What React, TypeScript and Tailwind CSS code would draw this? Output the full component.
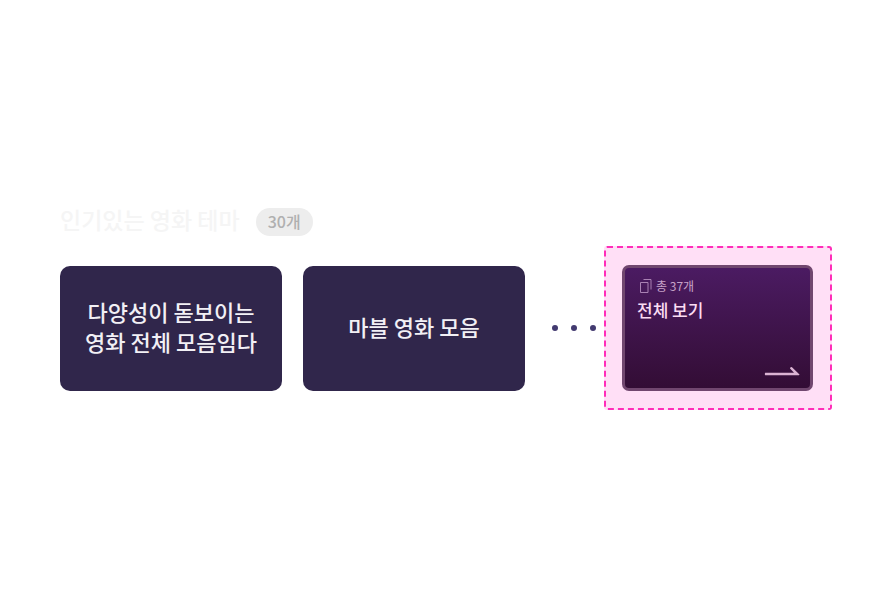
const cardClass =
  "h-[125px] min-w-0 flex-1 rounded-[10px] bg-[#30264b] pb-[5px] text-center text-[22px] leading-[30px] font-medium text-[#f2f0f5]";

export default function App() {
  return (
    <main className="min-h-screen bg-white pt-[206px] pr-11 pl-15 font-['Noto_Sans_CJK_KR',sans-serif]">
      <header className="flex h-[30px] items-end gap-4">
        <h1 className="pb-[2px] text-[23px] leading-[30px] font-medium text-[#f5f5f5]">인기있는 영화 테마</h1>
        <span className="flex h-7 items-center rounded-full bg-[#ededed] px-3 text-[16px] leading-7 font-medium text-[#b0b0b0]">
          <span className="pb-[2px]">30개</span>
        </span>
      </header>

      <section className="mt-[10px] flex items-center">
        <button type="button" className={`${cardClass} mr-[21px]`}>
          다양성이 돋보이는
          <br />
          영화 전체 모음임다
        </button>
        <button type="button" className={cardClass}>
          마블 영화 모음
        </button>

        <div className="mr-2 ml-[27px] flex w-11 shrink-0 justify-between" aria-hidden="true">
          <span className="size-[6px] rounded-full bg-[#433a70]" />
          <span className="size-[6px] rounded-full bg-[#433a70]" />
          <span className="size-[6px] rounded-full bg-[#433a70]" />
        </div>

        <div className="w-[228px] shrink-0 rounded-[3px] border-2 border-dashed border-[#ff2db9] bg-[#ffdff6] py-[17px] pr-[17px] pl-4">
          <button
            type="button"
            className="flex h-[126px] w-full flex-col items-start rounded-[7px] border-3 border-[#71476f] bg-linear-to-b from-[#4b1b62] to-[#330d35] pt-[6px] pr-[10px] pb-3 pl-3 text-left"
          >
            <span className="flex items-center gap-1 pl-[3px] text-[12px] leading-6 text-[#c7a3c8]">
              <svg width="12" height="14" viewBox="0 0 12 14" fill="none" stroke="#a981b3" aria-hidden="true">
                <path d="M.5 3.5h7.5v10h-7.5zM3.5 .5h7.5v10" />
              </svg>
              총 37개
            </span>
            <span className="text-[17px] leading-6 font-medium text-[#fbdcf3]">전체 보기</span>
            <svg
              className="mt-auto self-end"
              width="36"
              height="10"
              viewBox="0 0 36 10"
              fill="#dbb3d3"
              aria-hidden="true"
            >
              <path d="M1.2 6.8H30L26 2.5Q26.5 .6 28 1.2L35.5 8.6Q35.4 9.2 34.8 9.2H1.2Q.2 8 1.2 6.8Z" />
            </svg>
          </button>
        </div>
      </section>
    </main>
  );
}
